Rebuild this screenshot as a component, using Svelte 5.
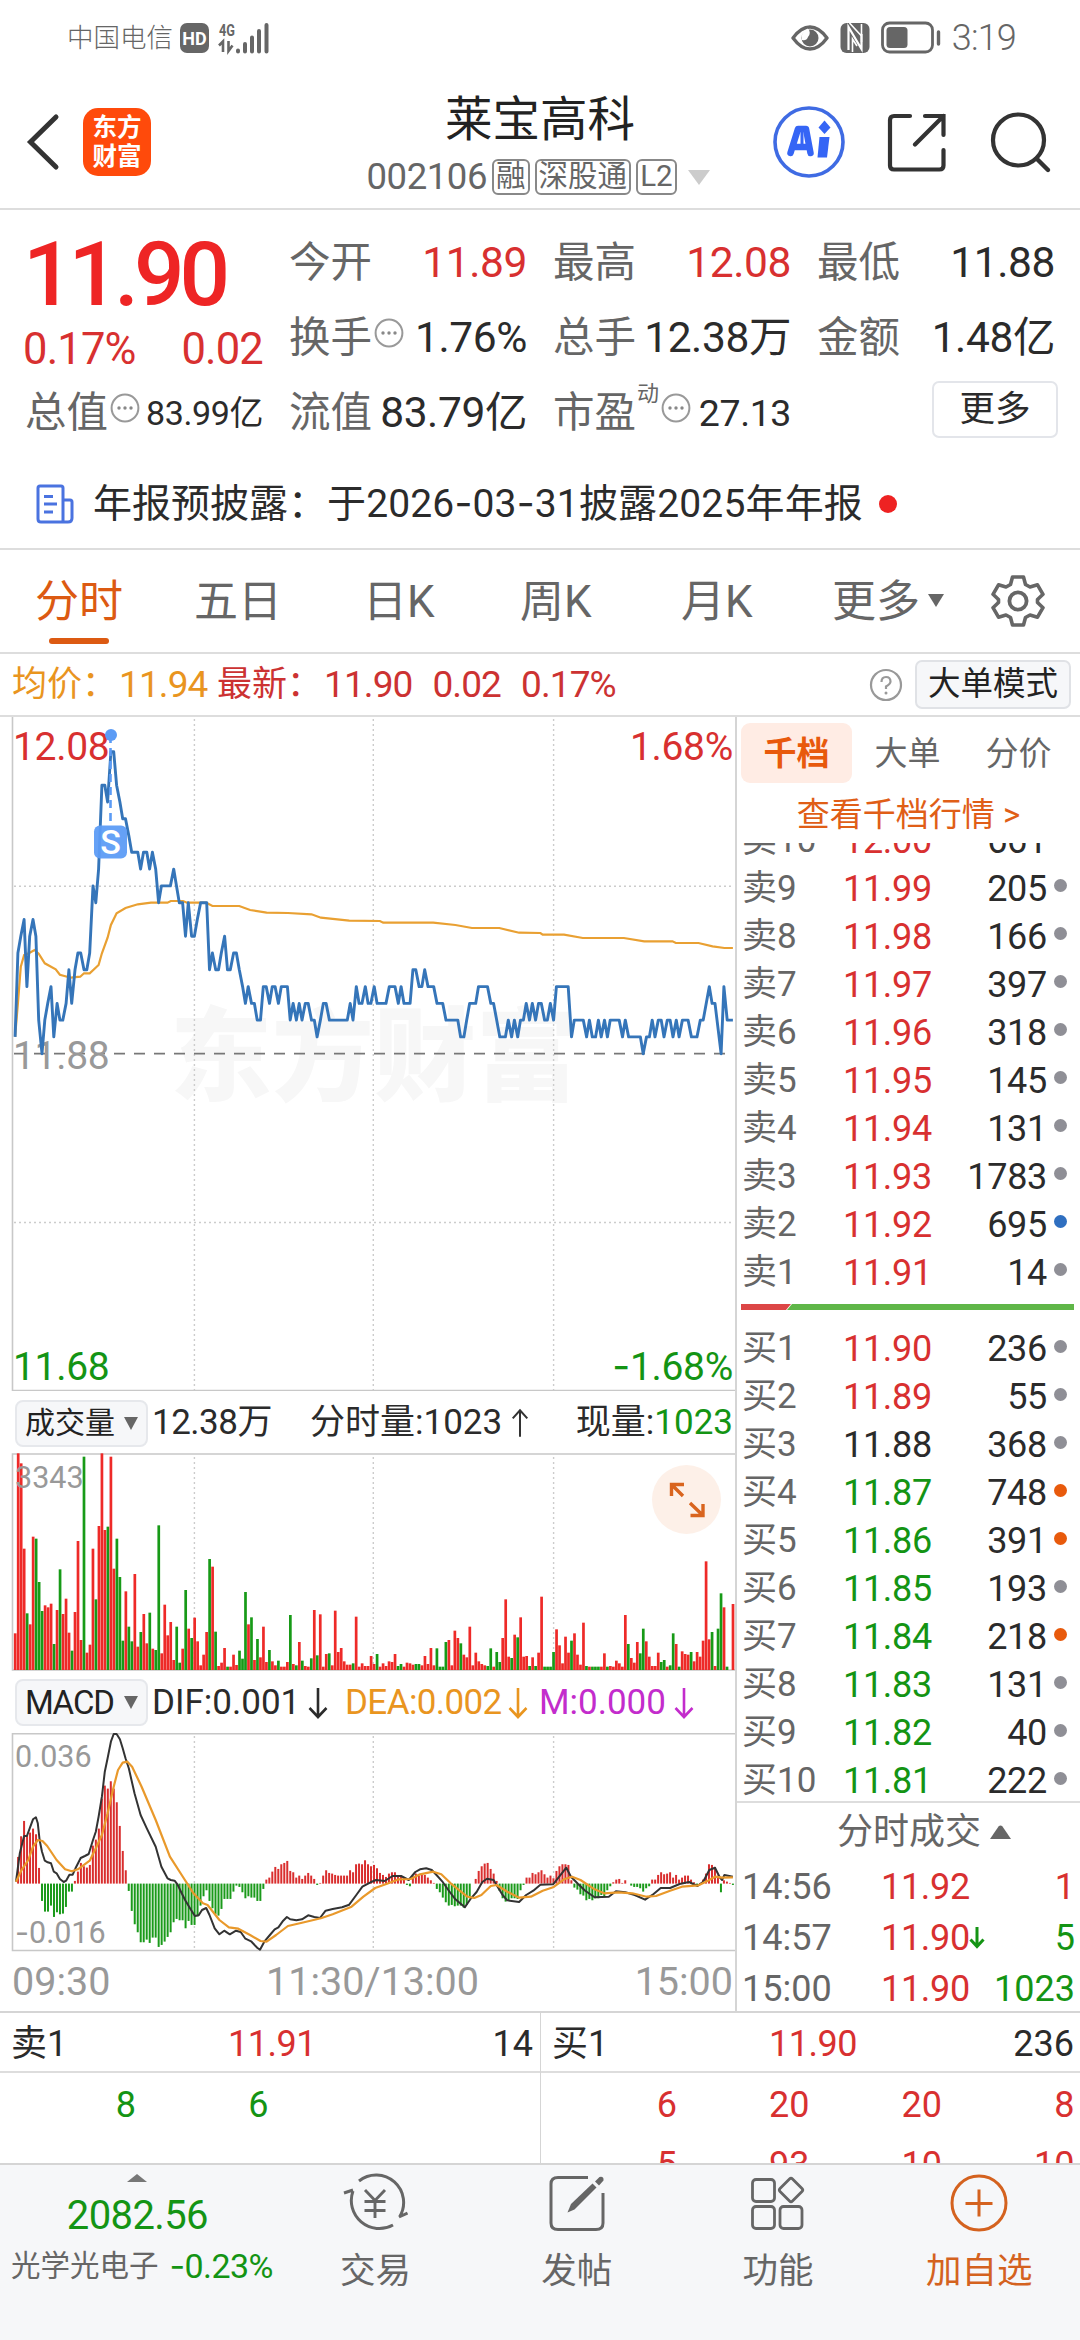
<script>
  const stats = [
    { label: '今开', value: '11.89', tone: 'up' },
    { label: '最高', value: '12.08', tone: 'up' },
    { label: '最低', value: '11.88', tone: '' },
    { label: '换手', value: '1.76%', tone: '', info: true },
    { label: '总手', value: '12.38万', tone: '' },
    { label: '金额', value: '1.48亿', tone: '' },
  ];

  const periods = ['分时', '五日', '日K', '周K', '月K'];

  const asks = [
    ['卖10', '12.00', '661', ''],
    ['卖9', '11.99', '205', 'grey'],
    ['卖8', '11.98', '166', 'grey'],
    ['卖7', '11.97', '397', 'grey'],
    ['卖6', '11.96', '318', 'grey'],
    ['卖5', '11.95', '145', 'grey'],
    ['卖4', '11.94', '131', 'grey'],
    ['卖3', '11.93', '1783', 'grey'],
    ['卖2', '11.92', '695', 'blue'],
    ['卖1', '11.91', '14', 'grey'],
  ];
  const bids = [
    ['买1', '11.90', '236', 'grey'],
    ['买2', '11.89', '55', 'grey'],
    ['买3', '11.88', '368', 'grey'],
    ['买4', '11.87', '748', 'orange'],
    ['买5', '11.86', '391', 'orange'],
    ['买6', '11.85', '193', 'grey'],
    ['买7', '11.84', '218', 'orange'],
    ['买8', '11.83', '131', 'grey'],
    ['买9', '11.82', '40', 'grey'],
    ['买10', '11.81', '222', 'grey'],
  ];
  const tone = (p) => (+p > 11.88 ? 'up' : +p < 11.88 ? 'down' : '');

  const ticks = [
    ['14:56', '11.92', '', '1', 'up'],
    ['14:57', '11.90', '↓', '5', 'down'],
    ['15:00', '11.90', '', '1023', 'down'],
  ];

  // Horizontal sample positions are scaled by KX, vertical ones by 1/3.
  const KX = 0.47193;
  const STEP = 6.3375;
  const nums = (s) => s.trim().split(/\s+/).map((p) => p.split(',').map(Number));
  const line = (s, fy) =>
    nums(s).map(([x, y]) => `${(x * KX).toFixed(1)},${fy(y).toFixed(1)}`).join(' ');

  // Price trace: position, cents above the previous close.
  const price = line(`32,1 38,6 44,7 51,8 57,4 63,7 70,8 76,7 82,2 89,0 95,2 101,3 108,4 114,1 121,3 127,2 133,2 140,3 146,5 152,3 159,5 165,6 171,6 178,5 184,5 190,6 197,10 203,9 209,11 216,16 222,16 228,15 235,18 241,18 247,16 254,15 260,14 266,14 273,13 279,12 292,12 298,11 304,12 311,12 317,11 323,12 330,11 336,9 342,10 361,10 368,11 374,10 380,9 387,9 393,7 399,9 406,7 412,7 418,8 425,9 438,9 444,5 450,6 457,5 463,5 469,6 476,7 482,5 488,5 495,6 501,6 507,5 514,4 520,3 526,4 533,3 539,3 545,2 552,2 558,4 564,4 571,3 577,4 583,4 590,3 596,4 609,4 615,2 621,3 628,2 634,3 640,2 647,3 653,3 660,2 666,2 672,1 679,2 685,3 691,3 698,2 736,2 742,3 748,2 755,4 761,3 767,3 774,4 780,3 786,3 793,4 799,3 818,3 825,4 837,4 844,3 850,4 856,3 869,3 875,5 881,5 888,4 894,4 900,5 907,4 919,4 926,3 938,3 945,2 970,2 976,1 983,1 989,2 995,3 1008,3 1014,4 1033,4 1040,3 1046,3 1059,1 1071,1 1077,2 1084,1 1090,2 1097,1 1103,2 1109,2 1115,3 1122,2 1128,3 1135,2 1141,3 1147,3 1154,2 1160,2 1166,3 1173,2 1179,4 1204,4 1211,1 1217,2 1236,2 1243,1 1249,2 1255,1 1262,1 1268,2 1274,1 1281,2 1287,1 1293,2 1312,2 1319,1 1325,2 1332,1 1357,1 1363,0 1370,1 1376,1 1382,2 1388,1 1395,2 1401,2 1407,1 1414,2 1420,2 1426,1 1433,2 1439,1 1446,2 1458,2 1465,1 1477,1 1484,2 1490,2 1503,4 1509,3 1515,3 1528,0 1534,4 1541,2 1553,2`, (v) => 336.7 - v * 16.78);

  const average = line(`32,980 38,880 44,770 51,735 62,729 73,720 82,731 95,760 118,778 127,794 150,803 170,800 178,790 190,790 209,765 216,730 228,683 235,645 247,610 266,594 292,583 320,578 355,578 362,573 388,573 396,578 437,578 450,588 507,588 530,600 565,608 610,609 660,613 680,623 740,632 805,633 812,638 918,638 965,645 1000,654 1058,654 1100,668 1145,669 1150,674 1195,674 1235,684 1322,684 1365,694 1425,694 1432,699 1480,699 1510,709 1535,714 1553,714`, (v) => v / 3 - 7);

  const volume = `r110 r650 r620 r364 g170 r137 r400 g394 g264 g177 r194 r188 r199 g78 r180 g302 r168 r214 r112 g58 r174 r387 r90 g640 r52 r76 r364 g212 r432 r650 r420 g430 r640 r304 g394 g279 g88 r236 g130 g86 r288 r70 g114 r168 r80 g172 r64 g60 g434 r50 r196 r104 r144 r30 g130 g22 r64 g240 r124 g96 r157 r86 r14 r46 r114 g333 r310 g115 r12 r22 r66 g10 r10 r46 r15 g58 g34 g234 r137 g158 r30 g93 r38 r130 r24 g60 r26 r14 g28 r10 r10 r24 g165 r18 g14 r84 g28 r12 r10 g35 r180 g44 r167 r10 r48 g50 r14 r178 r54 r66 r26 r16 r16 g20 r160 r10 r20 r12 r12 r42 r18 g48 r10 r20 r12 r26 r24 r48 g12 g18 r10 r22 r20 r16 g18 g18 r14 r42 r18 r66 r14 g65 g10 g10 g84 r90 r14 r118 r96 g80 r46 r38 r130 r14 r52 r26 r18 r14 g12 g65 r10 g54 g24 r96 r212 r40 g36 r106 g98 r158 r40 r42 g12 r38 g12 r52 r220 g10 g10 g10 g54 r122 r74 r20 r100 r52 g88 r110 r46 r16 r142 g12 r10 g10 g10 g10 r10 r50 g10 r12 r10 r28 r20 r10 r165 g78 r36 r22 r84 g50 g124 r86 r40 r12 r12 r52 g24 g30 r10 g14 g110 r78 g10 r56 r48 r46 g54 r26 r54 r40 r88 r326 r92 g114 r12 g124 g230 r188 g10 r0 r198`
    .split(' ')
    .map((s, i) => ({ x: (32 + i * STEP) * KX - 1.25, h: +s.slice(1) / 3, c: s[0] === 'r' ? '#ee2a28' : '#179a17' }));

  const histogram = `0 80 142 188 145 153 165 148 47 -52 -84 -84 -66 -100 -86 -92 -90 -70 -24 -24 8 36 62 52 48 56 114 132 165 255 294 285 307 285 244 173 98 40 -22 -82 -122 -146 -176 -176 -168 -178 -162 -162 -190 -184 -174 -160 -146 -116 -106 -110 -110 -134 -112 -124 -124 -98 -66 -38 -20 -52 -74 -92 -96 -76 -46 -46 -46 -24 -6 -10 -26 -44 -38 -42 -42 -52 -52 -16 12 18 36 50 44 58 62 68 38 34 18 24 14 24 32 24 14 -4 2 24 40 32 30 26 24 24 24 24 40 34 58 60 58 70 58 52 56 46 32 26 20 30 34 34 24 24 18 -4 -8 22 30 24 26 26 18 10 2 -16 -26 -42 -56 -66 -64 -68 -66 -66 -72 -64 -44 0 14 38 52 60 62 44 30 8 -22 -44 -54 -50 -44 -44 -46 -20 -4 18 18 32 28 34 40 28 18 24 16 38 52 58 58 56 10 -12 -18 -32 -36 -50 -46 -50 -44 -44 -34 -38 -20 -8 4 12 14 2 10 0 -6 -10 -10 -14 -24 -14 -8 12 12 26 34 28 30 34 18 26 12 18 24 24 12 4 -6 2 12 30 58 56 50 24 -26 10 6 2 -4`
    .split(' ')
    .map((s, i) => ({ x: (32 + i * STEP) * KX - 1, v: +s / 3 }));

  const my = (v) => v / 3 - 53;
  const dif = line(`34,605 42,520 51,468 57,468 63,445 70,418 76,412 80,430 84,480 89,515 95,542 101,547 108,550 114,575 120,580 127,597 135,606 140,602 147,584 154,584 160,565 171,534 180,528 188,522 197,480 203,455 209,410 216,350 222,275 228,235 235,185 241,162 247,162 254,178 260,205 266,235 273,265 285,340 298,405 311,445 330,500 342,560 355,595 362,600 370,602 376,613 385,640 393,662 405,690 413,708 421,706 428,690 437,684 444,705 455,745 465,763 475,752 487,763 500,752 510,756 520,776 532,784 545,803 551,809 560,785 572,765 582,748 590,742 600,722 608,711 615,718 628,721 640,718 653,706 666,711 678,714 690,692 705,687 725,682 740,674 755,645 768,620 785,607 797,600 815,603 832,588 850,588 866,600 880,576 890,568 903,565 915,570 925,585 937,604 950,630 965,658 985,682 998,655 1010,636 1022,606 1032,596 1046,600 1057,626 1065,645 1075,661 1100,666 1115,645 1130,632 1145,614 1172,613 1185,590 1200,563 1210,590 1225,612 1240,632 1260,652 1290,650 1305,634 1325,637 1345,645 1367,659 1385,642 1400,624 1420,624 1440,612 1460,606 1478,618 1490,605 1503,570 1515,563 1525,592 1530,600 1535,585 1553,590`, my);
  const dea = line(`34,605 45,572 60,540 70,500 80,480 90,483 100,498 120,540 138,568 152,574 165,568 190,542 203,505 216,465 228,400 241,320 250,270 260,248 270,245 280,260 300,320 330,420 360,530 385,585 410,640 430,670 440,675 465,720 485,742 505,746 530,765 552,783 565,785 585,765 610,738 640,728 680,715 705,703 745,680 770,650 795,624 820,611 845,598 870,597 890,583 918,575 935,583 955,610 990,650 1005,654 1020,645 1040,618 1052,615 1075,635 1100,653 1125,650 1150,632 1172,622 1195,598 1212,590 1230,600 1260,628 1280,640 1310,637 1340,640 1370,650 1390,648 1420,632 1445,620 1480,616 1500,602 1515,590 1530,593 1553,592`, my);

  const gridX = [194.4, 373.3, 553.6];
</script>

{#snippet info()}
  <svg class="info" viewBox="0 0 30 30" width="30" height="30">
    <circle cx="15" cy="15" r="13.4" fill="none" stroke="#999" stroke-width="2" />
    <circle cx="9" cy="15" r="1.7" fill="#888" /><circle cx="15" cy="15" r="1.7" fill="#888" /><circle cx="21" cy="15" r="1.7" fill="#888" />
  </svg>
{/snippet}

{#snippet level(row)}
  <div class="level">
    <span class="side">{row[0]}</span>
    <span class="lp {tone(row[1])}">{row[1]}</span>
    <span class="lv">{row[2]}</span>
    <i class="dot {row[3]}"></i>
  </div>
{/snippet}

{#snippet down()}
  <svg class="arr" viewBox="0 0 22 34" width="22" height="34"><path d="M11 2V31M2.500 22L11 31L19.500 22" fill="none" stroke="currentColor" stroke-width="2.600" /></svg>
{/snippet}

<div class="app">
  <div class="status">
    <span class="carrier">中国电信</span>
    <span class="hd">HD</span>
    <svg class="signal" width="54" height="36" viewBox="0 0 54 36">
      <text x="1" y="15.500" class="g4" textLength="16" lengthAdjust="spacingAndGlyphs">4G</text>
      <path d="M1 25.500L5 21.500V32M14.500 25.500L10.500 31V21" fill="none" stroke="#666" stroke-width="2.600" />
      <path d="M20 30.500V31.500M27 24V31.500M34 17.500V31.500M41 11V31.500M48.500 5V31.500" stroke="#666" stroke-width="4" stroke-linecap="round" />
    </svg>
    <span class="grow"></span>
    <svg width="38" height="30" viewBox="0 0 38 30">
      <path d="M2 15Q10 4 19 4T36 15Q28 26 19 26T2 15Z" fill="none" stroke="#666" stroke-width="3.400" stroke-linejoin="round" />
      <circle cx="19" cy="15" r="8.500" fill="#666" />
      <path d="M17 5.500A6 6 0 0 1 17 14A5 5 0 0 1 11 17A9 9 0 0 1 17 5.500Z" fill="#fff" />
    </svg>
    <svg class="nfc" width="30" height="32" viewBox="0 0 30 32">
      <rect x="0.500" y="1" width="29" height="30" rx="6" fill="#666" />
      <path d="M8.500 28V5L21.500 27V12" fill="none" stroke="#fff" stroke-width="2.200" /><path d="M12.500 30V17L17 24M21.500 14L9.500 1M21.500 20V2" fill="none" stroke="#fff" stroke-width="1.600" />
    </svg>
    <svg class="batt" width="60" height="34" viewBox="0 0 60 34">
      <rect x="1.500" y="2" width="50" height="29" rx="7" fill="none" stroke="#666" stroke-width="2.800" />
      <rect x="5.500" y="6" width="21" height="21" rx="3.500" fill="#666" />
      <path d="M57.500 11V23" stroke="#666" stroke-width="3.400" stroke-linecap="round" />
    </svg>
    <span class="clock">3:19</span>
  </div>

  <header>
    <svg class="back" width="36" height="60" viewBox="0 0 36 60"><path d="M32 5L6.500 30L32 55" fill="none" stroke="#333" stroke-width="5" stroke-linecap="round" /></svg>
    <div class="logo"><span>东方</span><span>财富</span></div>
    <div class="title">
      <h1>莱宝高科</h1>
      <div class="sub">
        <span class="code">002106</span><span class="tag">融</span><span class="tag">深股通</span><span class="tag">L2</span>
        <svg class="tri" width="22" height="15" viewBox="0 0 22 15"><path d="M0 0H22L11 15Z" fill="#ccc" /></svg>
      </div>
    </div>
    <svg class="ai" width="76" height="76" viewBox="0 0 76 76">
      <circle cx="38" cy="38" r="34" fill="#fff" stroke="#3f6be3" stroke-width="3.600" />
      <path d="M19.500 49L27 25H35L39.500 49M22 43H37" fill="none" stroke="#3565f5" stroke-width="6.500" stroke-linejoin="round" stroke-linecap="round" />
      <path d="M31 24V46" stroke="#3565f5" stroke-width="3" />
      <path d="M48.500 33H58.500L56 53.500H46.500Z" fill="#3565f5" />
      <path d="M53.500 16.500L59.500 23.500L53.500 30L47.500 23.500Z" fill="#3565f5" />
    </svg>
    <svg class="share" width="60" height="62" viewBox="0 0 60 62">
      <path d="M24 5H8Q4 5 4 9V54.500Q4 58.500 8 58.500H53.500Q57.500 58.500 57.500 54.500V39M39 5H57.500V24M57.500 5L29 33.500" fill="none" stroke="#333" stroke-width="4.200" stroke-linecap="round" />
    </svg>
    <svg class="search" width="64" height="66" viewBox="0 0 64 66">
      <circle cx="30.500" cy="31" r="25.500" fill="none" stroke="#333" stroke-width="4.200" />
      <path d="M48.500 49.500L60 61" stroke="#333" stroke-width="4.400" stroke-linecap="round" />
    </svg>
  </header>

  <section class="quote">
    <div class="last">
      <div class="big">11.90</div>
      <div class="chg"><span>0.17%</span><span>0.02</span></div>
    </div>
    {#each stats as s}
      <div class="stat">
        <span class="label">{s.label}</span>{#if s.info}{@render info()}{/if}
        <span class="val {s.tone}">{s.value}</span>
      </div>
    {/each}
    <div class="stat"><span class="label">总值</span>{@render info()}<span class="val small">83.99亿</span></div>
    <div class="stat"><span class="label">流值</span><span class="val">83.79亿</span></div>
    <div class="stat"><span class="label">市盈</span><span class="dyn">动</span>{@render info()}<span class="val mid">27.13</span></div>
    <div class="stat end"><span class="more">更多</span></div>
  </section>

  <section class="news">
    <svg width="38" height="40" viewBox="0 0 38 40">
      <path d="M4 2H25Q27 2 27 4V38H5Q2 38 2 35V4Q2 2 4 2ZM27 16H34Q36 16 36 18V34Q36 38 32 38H27" fill="none" stroke="#4a73e0" stroke-width="3" />
      <path d="M8 12.500H17M8 20H21M8 28H17" stroke="#4a73e0" stroke-width="3" />
    </svg>
    <span class="news-text">年报预披露：<span class="ntail">于2026<span class="hy">-</span>03<span class="hy">-</span>31披露2025年年报</span></span>
    <i></i>
  </section>

  <nav class="periods">
    {#each periods as p, i}
      <span class="period p{i}" class:active={i === 0}>{p}</span>
    {/each}
    <span class="period p5">更多<svg width="16" height="13" viewBox="0 0 16 13"><path d="M0 0H16L8 13Z" fill="#666" /></svg></span>
    <svg class="gear" width="54" height="54" viewBox="0 0 54 54">
      <path d="M21.500 3H32.500L34.500 10.500L39 13L46.500 10.800L52 20.300L46.500 25.500V28.500L52 33.700L46.500 43.200L39 41L34.500 43.500L32.500 51H21.500L19.500 43.500L15 41L7.500 43.200L2 33.700L7.500 28.500V25.500L2 20.300L7.500 10.800L15 13L19.500 10.500Z" fill="none" stroke="#666" stroke-width="3.600" stroke-linejoin="round" />
      <circle cx="27" cy="27" r="8.600" fill="none" stroke="#666" stroke-width="3.800" />
    </svg>
  </nav>

  <section class="infobar">
    <span class="avg">均价：</span><span class="avg n1">11.94</span>
    <span class="now">最新：</span><span class="now n2">11.90</span><span class="now n3">0.02</span><span class="now n3">0.17%</span>
    <span class="grow"></span>
    <svg width="34" height="34" viewBox="0 0 34 34">
      <circle cx="17" cy="17" r="15" fill="none" stroke="#999" stroke-width="2.200" />
      <path d="M12.500 14Q12.500 9 17 9T21.500 13.500Q21.500 16 17 18.500V21" fill="none" stroke="#999" stroke-width="2.200" /><circle cx="17" cy="25" r="1.500" fill="#999" />
    </svg>
    <span class="mode">大单模式</span>
  </section>

  <div class="main">
    <div class="charts">
      <svg class="plot" width="735" height="674" viewBox="0 0 735 674">
        <text x="374" y="376" class="wm" text-anchor="middle">东方财富</text>
        {#each gridX as x}<path d="M{x} 2V673" class="grid" />{/each}
        <path d="M14 169.300H733M14 505.500H733" class="grid" />
        <path d="M14 336.700H733" stroke="#777" stroke-width="1.800" stroke-dasharray="11 9" />
        <path d="M12.500 0V673.500H735" class="frame" />
        <text x="13" y="42.500" class="ax up">12.08</text>
        <text x="733" y="42.500" class="ax up" text-anchor="end">1.68%</text>
        <text x="13" y="351.500" class="ax mute">11.88</text>
        <text x="13" y="662.500" class="ax down">11.68</text>
        <text x="733" y="662.500" class="ax down" text-anchor="end"><tspan class="hy">-</tspan>1.68%</text>
        <polyline points={average} fill="none" stroke="#e9a032" stroke-width="2.200" />
        <polyline points={price} fill="none" stroke="#3575b9" stroke-width="2.900" stroke-linejoin="round" />
        <path d="M110.500 18V109" stroke="#5b9bf5" stroke-width="2.600" stroke-dasharray="8 5" />
        <circle cx="111" cy="18" r="6" fill="#5b9bf5" />
        <rect x="94" y="108.500" width="33" height="33" rx="6" fill="#5b9bf5" opacity="0.94" />
        <text x="110.500" y="136.500" class="s" text-anchor="middle">S</text>
      </svg>

      <div class="ind">
        <span class="pick">成交量<svg width="14" height="13" viewBox="0 0 14 13"><path d="M0 0H14L7 13Z" fill="#666" /></svg></span>
        <span class="v1">12.38万</span>
        <span class="v2">分时量:1023<svg class="arr" viewBox="0 0 22 34" width="20" height="34"><path d="M11 32V3M3 12L11 3L19 12" fill="none" stroke="#333" stroke-width="2.200" /></svg></span>
        <span class="v3">现量:<b>1023</b></span>
      </div>

      <svg class="plot" width="735" height="218" viewBox="0 0 735 218">
        {#each gridX as x}<path d="M{x} 4V216" class="grid" />{/each}
        <path d="M735 1H12.500V217H735" class="frame" />
        {#each volume as b}<rect x={b.x} y={217 - b.h} width="2.700" height={b.h} fill={b.c} />{/each}
        <text x="15" y="35" class="sm">3343</text>
        <circle cx="686.500" cy="46.500" r="34.500" fill="#fdf0e8" />
        <path d="M671.500 43V31.500H684M671.500 31.500L683 43M703 51V62.500H690.500M703 62.500L690 50" fill="none" stroke="#d9641e" stroke-width="3.400" />
      </svg>

      <div class="ind macd">
        <span class="pick">MACD<svg width="14" height="13" viewBox="0 0 14 13"><path d="M0 0H14L7 13Z" fill="#666" /></svg></span>
        <span class="m1">DIF:0.001{@render down()}</span>
        <span class="m2">DEA:0.002{@render down()}</span>
        <span class="m3">M:0.000{@render down()}</span>
      </div>

      <svg class="plot" width="735" height="219" viewBox="0 0 735 219">
        {#each gridX as x}<path d="M{x} 3V217" class="grid" />{/each}
        <path d="M735 0.700H12.500V217.500H735" class="frame" />
        <text x="15" y="34" class="sm">0.036</text>
        <text x="15" y="210" class="sm"><tspan class="hy">-</tspan>0.016</text>
        {#each histogram as b}
          <rect x={b.x} y={b.v > 0 ? 150.600 - b.v : 150.600} width="2" height={Math.abs(b.v)} fill={b.v > 0 ? '#d92e2e' : '#1a9a1a'} />
        {/each}
        <polyline points={dif} fill="none" stroke="#333" stroke-width="2" stroke-linejoin="round" />
        <polyline points={dea} fill="none" stroke="#e9992b" stroke-width="2.200" stroke-linejoin="round" />
      </svg>

      <div class="times"><span>09:30</span><span>11:30/13:00</span><span>15:00</span></div>
    </div>

    <aside>
      <div class="dtabs"><span class="on">千档</span><span>大单</span><span>分价</span></div>
      <div class="link">查看千档行情 &gt;</div>
      <div class="asks">{#each asks as r}{@render level(r)}{/each}</div>
      <svg class="ratio" width="333" height="6" viewBox="0 0 333 6"><path d="M0 0H50L45 6H0Z" fill="#dc4646" /><path d="M51 0H333V6H46Z" fill="#5fb648" /></svg>
      <div class="bids">{#each bids as r}{@render level(r)}{/each}</div>
      <div class="deals">
        <div class="dhead">分时成交<svg width="21" height="14" viewBox="0 0 21 14"><path d="M0 14L8.500 1.500Q10.500 -0.500 12.500 1.500L21 14Z" fill="#666" /></svg></div>
        {#each ticks as t}
          <div class="tick">
            <span class="tt">{t[0]}</span>
            <span class="tp up">{t[1]}</span>
            <span class="ta">{#if t[2]}<svg width="16" height="22" viewBox="0 0 16 22"><path d="M8 0V20M1.500 12.500L8 19.500L14.500 12.500" fill="none" stroke="#149414" stroke-width="3" /></svg>{/if}</span>
            <span class="tv {t[4]}">{t[3]}</span>
          </div>
        {/each}
      </div>
    </aside>
  </div>

  <section class="queue">
    <div class="half">
      <div class="qh"><span>卖1</span><span class="up">11.91</span><span>14</span></div>
      <div class="qr down"><span>8</span><span>6</span><span></span><span></span></div>
    </div>
    <div class="half">
      <div class="qh"><span>买1</span><span class="up">11.90</span><span>236</span></div>
      <div class="qr up"><span>6</span><span>20</span><span>20</span><span>8</span></div>
      <div class="qr up"><span>5</span><span>93</span><span>10</span><span>10</span></div>
    </div>
  </section>

  <footer>
    <div class="index">
      <svg width="20" height="8" viewBox="0 0 20 8"><path d="M0 8L10 0L20 8Z" fill="#777" /></svg>
      <div class="iv down">2082.56</div>
      <div class="il"><span>光学光电子</span><span class="down pc"><span class="hy">-</span>0.23%</span></div>
    </div>
    <div class="tool">
      <svg width="66" height="60" viewBox="0 0 66 60">
        <path d="M17 8A27.500 27.500 0 0 1 57.500 44M51 52A28 28 0 0 1 11 18M2 20L11 17M57 44L65.500 40" fill="none" stroke="#666" stroke-width="3" />
        <path d="M23 17L33 27.500L43 17M33 27.500V45M22.500 28.500H43.500M22.500 37.500H43.500" fill="none" stroke="#666" stroke-width="2.900" />
      </svg>
      <span>交易</span>
    </div>
    <div class="tool">
      <svg width="60" height="60" viewBox="0 0 60 60">
        <path d="M41 4.500H11Q4 4.500 4 11V50Q4 56.500 11 56.500H49Q56 56.500 56 50V20" fill="none" stroke="#666" stroke-width="3" />
        <path d="M20.500 39.500L24 31L45.500 10.500L49.500 14.500L27.500 36.500Z" fill="#666" /><path d="M48 8.500L52.500 4Q57 3 56.500 7.500L52 12.500Z" fill="#666" />
      </svg>
      <span>发帖</span>
    </div>
    <div class="tool">
      <svg width="60" height="60" viewBox="0 0 60 60">
        <g fill="none" stroke="#666" stroke-width="2.800"><rect x="4.500" y="6.500" width="22" height="22" rx="3.500" /><rect x="4.500" y="33.500" width="22" height="22" rx="3.500" /><rect x="32" y="33.500" width="22" height="22" rx="3.500" /><path d="M41.500 6Q43 4.500 44.500 6L54 15.500Q55.500 17 54 18.500L44.500 28Q43 29.500 41.500 28L32 18.500Q30.500 17 32 15.500Z" /></g>
      </svg>
      <span>功能</span>
    </div>
    <div class="tool add">
      <svg width="60" height="60" viewBox="0 0 60 60">
        <circle cx="30" cy="30" r="27" fill="none" stroke="#d4621f" stroke-width="3" /><path d="M30 16.500V43.500M16.500 30.500H43.500" stroke="#d4621f" stroke-width="3" />
      </svg>
      <span>加自选</span>
    </div>
  </footer>
</div>

<style>
  :global(body) { background: #fff; }
  .app {
    width: 1080px; height: 2340px; overflow: hidden; display: flex; flex-direction: column;
    font-family: Roboto, "Noto Sans CJK SC", sans-serif; font-size: 36px; line-height: 48px; color: #2b2b2b; white-space: nowrap;
    font-weight: 400; font-kerning: none;
  }
  .app * { box-sizing: border-box; }
  .app svg { flex: none; display: block; }
  .up { color: #d83030; fill: #d83030; }
  .down { color: #149414; fill: #149414; }
  .grow { flex: 1; }
  .hy { font-family: Inter, sans-serif; }

  .status { height: 76px; flex: none; display: flex; align-items: center; padding: 0 64px 0 67px; color: #666; }
  .carrier { font-size: 26.500px; font-weight: 300; width: 113px; }
  .hd { width: 29px; height: 30px; border-radius: 7px; background: #666; color: #fff; font: 700 18px/31px Roboto; text-align: center; margin-right: 9px; }
  .g4 { font: 700 16px Roboto; fill: #666; }
  .nfc { margin-left: 11px; }
  .batt { margin-left: 11px; }
  .clock { font-size: 36px; margin-left: 11px; letter-spacing: -0.800px; font-weight: 300; }

  header { height: 134px; flex: none; display: flex; align-items: center; padding: 0 28px 0 24px; border-bottom: 2px solid #ddd; }
  .logo { width: 68px; height: 68px; border-radius: 15px; background: #ff4a0b; margin-left: 23px; display: flex; flex-direction: column; align-items: center; justify-content: center; color: #fff; font-weight: 700; font-size: 24.500px; line-height: 29px; }
  .title { flex: 1; height: 132px; padding: 12px 0 0 158px; text-align: center; }
  h1 { margin: 0; font-size: 47.500px; font-weight: 400; line-height: 64px; color: #222; }
  .sub { display: flex; justify-content: center; align-items: center; height: 48px; margin: 1px 0 0 -4px; color: #666; }
  .code { font-size: 36.500px; letter-spacing: -0.400px; }
  .tag { height: 36px; border: 2px solid #888; border-radius: 6px; font-size: 29.500px; line-height: 31px; padding: 0 2px; margin-left: 5px; }
  .tri { margin-left: 11px; }
  .ai { margin-right: 39px; }
  .share { margin-right: 42px; }

  .quote { flex: none; height: 240px; padding: 15px 25px 0; display: grid; grid-template-columns: repeat(4, 238px); grid-template-rows: repeat(3, 75px); column-gap: 26px; }
  .last { grid-row: 1 / 3; color: #d83030; display: flex; flex-direction: column; }
  .big { font-size: 89px; line-height: 100px; font-weight: 500; color: #ee2525; letter-spacing: -5px; margin-left: -2px; }
  .chg { display: flex; justify-content: space-between; font-size: 43.500px; line-height: 50px; letter-spacing: -0.800px; margin-left: -2px; }
  .stat { display: flex; align-items: center; font-size: 41.500px; height: 75px; }
  .label { color: #666; }
  .val { margin-left: auto; font-size: 42.500px; letter-spacing: -0.400px; }
  .val.small { font-size: 34px; }
  .val.mid { font-size: 37.500px; }
  .info { margin: -9px 0 0 2px; }
  .dyn { font-size: 22px; color: #666; margin: -38px 0 0 1px; }
  .end { justify-content: flex-end; }
  .more { width: 126px; height: 57px; border: 2px solid #e3e5ea; border-radius: 7px; text-align: center; font-size: 35.500px; line-height: 52px; margin: -6px -3px 0 0; }

  .news { flex: none; height: 100px; padding: 9px 0 0 36px; border-bottom: 2px solid #ddd; display: flex; align-items: center; }
  .news-text { font-size: 39px; margin-left: 19px; }
  .ntail { letter-spacing: 0.150px; }
  .news i { width: 18px; height: 18px; border-radius: 50%; background: #ee2222; margin-left: 16px; }

  .periods { flex: none; height: 104px; border-bottom: 2px solid #ddd; display: flex; align-items: center; color: #666; font-size: 44px; position: relative; }
  .period { height: 102px; line-height: 106px; padding-top: 2px; display: flex; align-items: center; }
  .p0 { width: 160px; padding-left: 35px; }
  .p1 { width: 169px; margin-left: 34px; }
  .p2 { width: 157px; }
  .p3 { width: 161px; }
  .p4 { width: 151px; }
  .p5 { width: 195px; }
  .p5 svg { margin: -4px 0 0 8px; }
  .active { color: #dc5a12; position: relative; }
  .active::after { content: ""; position: absolute; left: 49px; top: 88px; width: 60px; height: 6px; border-radius: 3px; background: #dc5a12; }
  .gear { margin-left: -36px; }

  .infobar { flex: none; height: 63px; border-bottom: 2px solid #ddd; display: flex; align-items: center; padding: 0 9px 0 12px; font-size: 35px; }
  .avg { color: #e9951f; }
  .now { color: #cc3232; }
  .n1 { font-size: 37px; margin-left: 2px; letter-spacing: -0.900px; width: 98px; }
  .n2 { font-size: 37px; letter-spacing: -0.900px; margin-left: 2px; }
  .n3 { font-size: 37px; letter-spacing: -0.900px; margin-left: 20px; }
  .mode { width: 156px; height: 49px; margin-left: 12px; border: 2px solid #e0e2e6; border-radius: 7px; background: #f6f7f9; font-size: 32.500px; line-height: 44px; text-align: center; color: #222; }

  .main { flex: none; height: 1296px; display: flex; border-bottom: 2px solid #d5d5d5; }
  .charts { width: 735px; flex: none; }
  .grid { fill: none; stroke: #ccc; stroke-width: 1.400; stroke-dasharray: 2 3; }
  .frame { fill: none; stroke: #c8c8c8; stroke-width: 1.600; }
  .ax { font-size: 39px; letter-spacing: -0.300px; }
  .sm { font-size: 30.500px; fill: #999; }
  .mute { fill: #999; }
  .s { font-size: 34px; font-weight: 500; fill: #fff; }
  .wm { font: 900 102px "Noto Sans CJK SC"; fill: #f7f7f7; }
  .ind { height: 62px; display: flex; align-items: center; padding: 2px 0 0 15px; font-size: 35px; }
  .pick { width: 133px; height: 47px; border: 2px solid #e6e8ec; border-radius: 8px; background: #f6f7f9; display: flex; align-items: center; padding: 0 8px; font-size: 30px; justify-content: space-between; color: #222; }
  .v1 { margin-left: 4px; width: 158px; letter-spacing: -0.500px; }
  .v2 { display: flex; align-items: center; width: 258px; }
  .v2 .arr { margin-left: 8px; }
  .v3 { margin-left: auto; padding-right: 2px; }
  .v3 b { font-weight: 400; color: #149414; }
  .macd { height: 62px; padding-top: 1px; }
  .macd .pick { font-size: 33px; letter-spacing: -1.200px; }
  .m1, .m2, .m3 { display: flex; align-items: center; }
  .m1 { margin-left: 4px; width: 193px; }
  .m2 { color: #e9951f; width: 194px; letter-spacing: -0.600px; }
  .m3 { color: #c32ccc; }
  .macd .arr { margin-left: 7px; }
  .m2 .arr { margin-left: 5px; }
  .times { height: 60px; padding: 0 2px 0 12px; display: flex; justify-content: space-between; align-items: center; color: #999; font-size: 39.500px; letter-spacing: 0; }

  aside { flex: 1; border-left: 2px solid #d5d5d5; display: flex; flex-direction: column; }
  .dtabs { height: 66px; padding: 6px 6px 0 4px; display: grid; grid-template-columns: repeat(3, 111px); color: #666; font-size: 33px; flex: none; }
  .dtabs span { height: 60px; line-height: 61px; text-align: center; }
  .dtabs .on { background: #ffece4; border-radius: 9px; color: #e8590c; font-weight: 700; }
  .link { flex: none; height: 60px; line-height: 64px; text-align: center; color: #e05e17; font-size: 33px; }
  .asks { flex: none; height: 454px; overflow: hidden; display: flex; flex-direction: column; justify-content: flex-end; }
  .level { height: 48px; flex: none; display: flex; align-items: center; padding: 0 0 0 5px; }
  .side { width: 101px; color: #666; font-size: 35px; }
  .lp { width: 100px; letter-spacing: -0.300px; }
  .lv { width: 104px; text-align: right; letter-spacing: -0.300px; }
  .dot { width: 13px; height: 13px; border-radius: 50%; margin: -6px 0 0 7px; }
  .grey { background: #8f8f96; }
  .blue { background: #2f6fc0; }
  .orange { background: #e85a0c; }
  .asks .level { padding-bottom: 1px; }
  .ratio { margin: 7px 0 0 4px; }
  .bids { margin-top: 15px; flex: none; }
  .deals { flex: 1; margin-top: -4px; border-top: 2px solid #ddd; }
  .dhead { height: 58px; display: flex; align-items: center; padding-left: 100px; color: #666; font-size: 36px; gap: 9px; }
  .tick { height: 51px; display: flex; align-items: center; padding-left: 5px; }
  .tt { width: 139px; color: #666; }
  .tp { width: 88px; letter-spacing: -0.300px; }
  .ta { width: 20px; }
  .tv { width: 86px; text-align: right; }

  .queue { flex: none; height: 150px; overflow: hidden; display: flex; }
  .half { width: 540px; }
  .half + .half { border-left: 1px solid #d5d5d5; }
  .qh { height: 60px; border-bottom: 2px solid #ddd; padding: 3px 7px 0 11px; display: grid; grid-template-columns: 160px 202px 160px; align-items: center; }
  .qh span:nth-child(2) { text-align: center; letter-spacing: -0.500px; }
  .qh span:nth-child(3) { text-align: right; }
  .qr { height: 60px; padding: 4px 5px 0 0; display: grid; grid-template-columns: 136px repeat(3, 132.500px); align-items: center; text-align: right; }

  footer { flex: 1; background: #f6f7f9; border-top: 2px solid #d5d5d5; display: flex; }
  .index { width: 275px; padding-top: 9px; display: flex; flex-direction: column; align-items: center; }
  .iv { font-size: 40px; line-height: 60px; letter-spacing: -0.600px; margin: 4px 0 0; }
  .il { display: flex; align-items: center; color: #666; font-size: 29.500px; line-height: 40px; gap: 11px; margin-left: 9px; }
  .pc { font-size: 34px; letter-spacing: -0.600px; }
  .tool { width: 201.500px; padding-top: 8px; display: flex; flex-direction: column; align-items: center; color: #666; font-size: 35.500px; }
  .tool span { margin-top: 14px; }
  .add { color: #d4621f; }
</style>
